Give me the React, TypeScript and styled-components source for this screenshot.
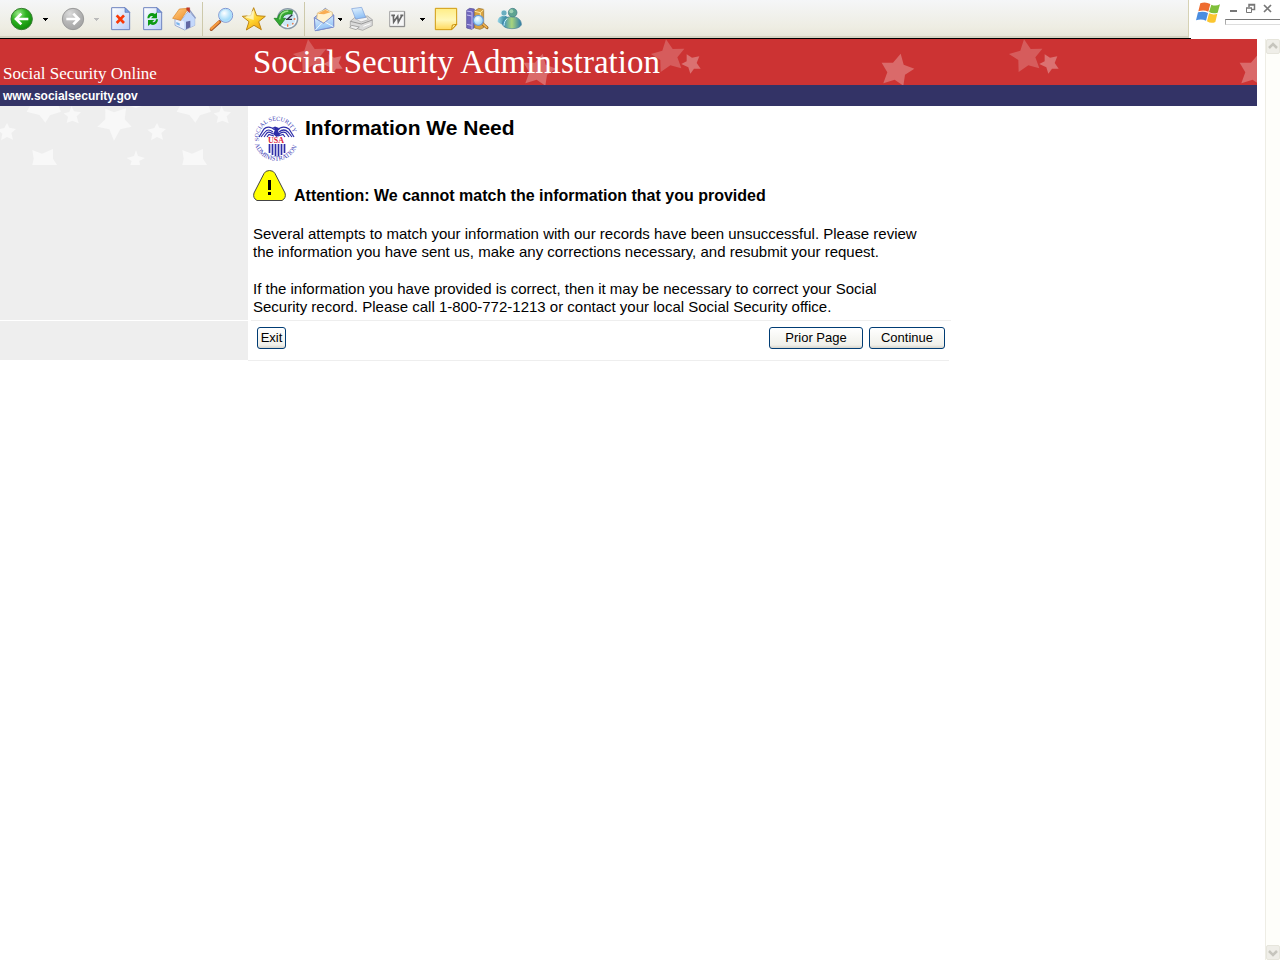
import React from "react";
import styled, { createGlobalStyle } from "styled-components";

const GlobalStyle = createGlobalStyle`
  * { box-sizing: border-box; }
  body { margin: 0; background: #fff; color: #000; font-family: "Liberation Sans", Arial, sans-serif; }
  button { font-family: inherit; }
`;

const Window = styled.div`
  min-height: 100vh;
  display: flex;
  flex-direction: column;
`;

/* ---------- browser chrome ---------- */
const Chrome = styled.div`
  display: flex;
  height: 39px;
`;
const ToolbarEdge = styled.div`
  flex: 1;
  padding-right: 2px;
  border-bottom: 1px solid #000;
`;
const Toolbar = styled.div`
  height: 38px;
  display: flex;
  padding-left: 6px;
  background: linear-gradient(#f5f6f8, #eeede3 75%, #e9e7da);
  border-right: 1px solid #d6d2b4;
  border-bottom: 2px solid #d5d3c1;
`;
const Group = styled.div<{ $after?: number }>`
  display: flex;
  margin-right: ${(p) => p.$after ?? 0}px;
`;
const Separator = styled.span`
  width: 1px;
  margin: 2px 3px 0 1px;
  background: #cdc9ab;
`;
const ToolButton = styled.button<{ $width?: number }>`
  width: ${(p) => p.$width ?? 32}px;
  height: 38px;
  padding: 0;
  border: 0;
  background: none;
  svg { display: block; }
`;
const CaptionArea = styled.div`
  width: 89px;
  display: flex;
  padding-left: 3px;
`;
const CaptionRight = styled.div`
  flex: 1;
  margin-left: 3px;
`;
const CaptionButtons = styled.div`
  height: 19px;
  display: flex;
  justify-content: space-between;
  padding: 2px 6px 0 2px;
`;
const CaptionButton = styled.button`
  width: 13px;
  height: 13px;
  padding: 0;
  border: 0;
  background: none;
  svg { display: block; }
`;
const CaptionField = styled.div`
  height: 6px;
  border: 1px solid #aaa;
  border-top-color: #777;
  border-right: 0;
  border-bottom-color: #ddd;
`;

/* ---------- page ---------- */
const Viewport = styled.div`
  flex: 1;
  display: flex;
`;
const Page = styled.div`
  flex: 1;
  padding-right: 8px;
`;
const Header = styled.header`
  display: grid;
  grid-template-columns: 248px 1fr;
  color: #fff;
`;
const SiteName = styled.div`
  height: 46px;
  padding: 24px 0 0 3px;
  background: #cc3333;
  font: 17px/22px "Liberation Serif", Georgia, serif;
  white-space: nowrap;
`;
const Banner = styled.div`
  position: relative;
  height: 46px;
  padding: 3px 0 0 5px;
  background: #cc3333;
  overflow: hidden;
`;
const BannerStars = styled.svg`
  position: absolute;
  inset: 0;
  width: 100%;
  height: 100%;
`;
const BannerTitle = styled.div`
  position: relative;
  font: 33px/40px "Liberation Serif", Georgia, serif;
  white-space: nowrap;
`;
const AddressBar = styled.div`
  grid-column: 1 / -1;
  height: 21px;
  padding-left: 3px;
  background: #333366;
  font-size: 12px;
  font-weight: bold;
  line-height: 22px;
`;
const AddressLink = styled.a`
  color: #fff;
  text-decoration: none;
`;
const Body = styled.div`
  display: grid;
  grid-template-columns: 248px minmax(0, 703px);
`;
const Sidebar = styled.aside`
  background: #eee;
  svg { display: block; }
`;
const SidebarFoot = styled.div`
  margin-bottom: 1px;
  background: #eee;
  border-top: 1px solid #fff;
`;
const Main = styled.main`
  padding: 9px 0 4px 5px;
`;
const TitleRow = styled.div`
  display: flex;
  gap: 5px;
  height: 54px;
`;
const Title = styled.h1`
  margin: 0;
  font-size: 21px;
  line-height: 26px;
`;
const AlertRow = styled.div`
  display: flex;
  align-items: flex-end;
  gap: 8px;
  height: 36px;
  margin-bottom: 20px;
`;
const AlertIcon = styled.svg`
  flex: none;
  margin-bottom: 3px;
`;
const AlertText = styled.h2`
  margin: 0;
  font-size: 16px;
  line-height: 18px;
`;
const Paragraph = styled.p`
  margin: 0;
  font-size: 15px;
  line-height: 18px;
  & + & { margin-top: 19px; }
`;
const Actions = styled.div`
  height: 41px;
  border-bottom: 1px solid #eee;
  margin-right: 2px;
`;
const ActionsInner = styled.div`
  display: flex;
  gap: 6px;
  margin: 0 -2px 0 3px;
  padding: 6px 6px 0;
  border-top: 1px solid #eee;
`;
const FormButton = styled.button<{ $width: number; $push?: boolean }>`
  width: ${(p) => p.$width}px;
  height: 22px;
  margin-right: ${(p) => (p.$push ? "auto" : "0")};
  padding: 0 0 1px;
  border: 1px solid #003c74;
  border-radius: 3px;
  background: linear-gradient(#fff, #f0f0ea 85%, #d8d4ca);
  color: #000;
  font-size: 13px;
  line-height: 18px;
`;

/* ---------- scrollbar ---------- */
const Scrollbar = styled.div`
  width: 15px;
  display: flex;
  flex-direction: column;
  justify-content: space-between;
  background: #fefefa;
  border-left: 1px solid #eeede5;
`;
const ScrollButton = styled.button`
  height: 15px;
  padding: 0;
  border: 1px solid #e6e5dc;
  border-radius: 2px;
  background: #efeee8;
  svg { display: block; }
`;

/* Icons are drawn on a grid of three units to the pixel. */
const Icon = ({ x, w = 96, children }: { x: number; w?: number; children: React.ReactNode }) => (
  <svg width={w / 3} height="38" viewBox={`${x} 0 ${w} 114`} aria-hidden="true">
    {children}
  </svg>
);

const CaretButton = ({ label, width = 14, faded }: { label: string; width?: number; faded?: boolean }) => (
  <ToolButton $width={width} aria-label={label}>
    <svg width={width} height="38" viewBox={`${-width / 2} 0 ${width} 38`}>
      <path d="M-2 18h5v1h-1v1h-1v1h-1v-1h-1v-1h-1z" fill={faded ? "#bbb" : "#000"} />
    </svg>
  </ToolButton>
);

const DefsSvg = styled.svg`
  position: absolute;
`;

const Defs = () => (
  <DefsSvg width="0" height="0" aria-hidden="true">
    <defs>
      <radialGradient id="green" cx=".35" cy=".25" r=".8">
        <stop offset="0" stopColor="#9be88a" /><stop offset=".45" stopColor="#2fb321" /><stop offset="1" stopColor="#0c8a08" />
      </radialGradient>
      <radialGradient id="grey" cx=".35" cy=".25" r=".8">
        <stop offset="0" stopColor="#dcdcdc" /><stop offset=".5" stopColor="#b8b8b8" /><stop offset="1" stopColor="#a2a2a2" />
      </radialGradient>
      <linearGradient id="paper" x2="1" y2="1">
        <stop offset="0" stopColor="#fff" /><stop offset="1" stopColor="#b9cdf8" />
      </linearGradient>
      <linearGradient id="roof" x2="1" y2="1">
        <stop offset="0" stopColor="#ffd08a" /><stop offset="1" stopColor="#f08a20" />
      </linearGradient>
      <radialGradient id="glass" cx=".4" cy=".35">
        <stop offset="0" stopColor="#fff" /><stop offset="1" stopColor="#a5dcfa" />
      </radialGradient>
      <linearGradient id="gold" x2=".7" y2="1">
        <stop offset="0" stopColor="#fffbc0" /><stop offset=".6" stopColor="#ffd42e" /><stop offset="1" stopColor="#f0a010" />
      </linearGradient>
      <linearGradient id="note" x2="0" y2="1">
        <stop offset="0" stopColor="#ffed85" /><stop offset=".55" stopColor="#fff8bb" /><stop offset="1" stopColor="#ffd85a" />
      </linearGradient>
      <linearGradient id="sheet" x2=".3" y2="1">
        <stop offset="0" stopColor="#e8f6ff" /><stop offset="1" stopColor="#8fc0f5" />
      </linearGradient>
      <linearGradient id="teal" x2="1">
        <stop offset="0" stopColor="#9ad6e8" /><stop offset=".45" stopColor="#4f9eb0" /><stop offset="1" stopColor="#2b7fb0" />
      </linearGradient>
      <linearGradient id="moss" x2="1">
        <stop offset="0" stopColor="#2f86c4" /><stop offset=".5" stopColor="#a8d47c" /><stop offset="1" stopColor="#2d7cab" />
      </linearGradient>
    </defs>
  </DefsSvg>
);

const PageShape = ({ x }: { x: number }) => (
  <g transform={`translate(${x} 0)`}>
    <path d="M1 23H41L55 37V89H1Z" fill="url(#paper)" stroke="#6f84c0" strokeWidth="3" />
    <path d="M41 23V37H55Z" fill="#7ea2e6" stroke="#5670b4" strokeWidth="2" />
  </g>
);

const BackIcon = () => (
  <Icon x={18}>
    <circle cx="65" cy="57" r="32" fill="url(#green)" stroke="#3a7d34" strokeWidth="3" />
    <path d="M64 41L48 57L64 73M49 57H85" fill="none" stroke="#fff" strokeWidth="8" />
  </Icon>
);
const ForwardIcon = () => (
  <Icon x={171}>
    <circle cx="219" cy="57" r="32" fill="url(#grey)" stroke="#9a9a9a" strokeWidth="3" />
    <path d="M220 41L236 57L220 73M235 57H199" fill="none" stroke="#fff" strokeWidth="8" />
  </Icon>
);
const StopIcon = () => (
  <Icon x={315}>
    <PageShape x={334} />
    <path d="M350 46L372 69M372 46L350 69" stroke="#fa3a08" strokeWidth="8" />
  </Icon>
);
const RefreshIcon = () => (
  <Icon x={411}>
    <PageShape x={430} />
    <path d="M442 55C443 40 456 35 465 42L471 37V55H453L459 49C453 46 449 49 448 55Z" fill="#0c9a12" />
    <path d="M474 58C473 73 460 79 451 72L444 78V60H463L457 66C463 68 467 65 468 58Z" fill="#0c9a12" />
  </Icon>
);
const HomeIcon = () => (
  <Icon x={507}>
    <path d="M525 55L543 62L566 33L584 54V76L554 90L525 76Z" fill="#e9f0ff" stroke="#7a8fc5" strokeWidth="2" />
    <path d="M545 60L566 35L584 55V76L553 89V65Z" fill="#c4d8fb" />
    <path d="M518 55L538 27L565 25L542 61Z" fill="url(#roof)" stroke="#d98222" strokeWidth="2" />
    <path d="M565 25L587 55" stroke="#8d9dc8" strokeWidth="4" />
    <path d="M560 23H569V38L560 30Z" fill="#c93a22" stroke="#922" />
    <path d="M558 65L571 62V82L558 88Z" fill="#6268a4" />
    <path d="M529 66L539 70V77L529 73Z" fill="#79b3ea" />
  </Icon>
);
const SearchIcon = () => (
  <Icon x={18}>
    <path d="M34 88L59 65" stroke="#a5562a" strokeWidth="10" strokeLinecap="round" />
    <path d="M34 86L56 66" stroke="#f59a3e" strokeWidth="7" strokeLinecap="round" />
    <circle cx="77" cy="46" r="21" fill="url(#glass)" stroke="#8095d2" strokeWidth="3" />
    <circle cx="77" cy="46" r="18" fill="none" stroke="#b4e0fa" strokeWidth="3" />
  </Icon>
);
const StarIcon = () => (
  <Icon x={114}>
    <path d="M161 23L170 47L196 49L176 65L184 89L162 76L139 90L147 65L127 49L152 47Z" fill="url(#gold)" stroke="#bd8614" strokeWidth="3" strokeLinejoin="round" />
    <path d="M161 30V60L136 52Z" fill="#fffde0" opacity=".7" />
  </Icon>
);
const HistoryIcon = () => (
  <Icon x={210}>
    <circle cx="263" cy="56" r="30" fill="#dcebf5" stroke="#8b9aa8" strokeWidth="4" />
    <circle cx="263" cy="56" r="25" fill="#cfe7f6" stroke="#fff" strokeWidth="3" />
    <path d="M262 58L277 44M258 58H276" stroke="#334" strokeWidth="4" />
    <path d="M263 73V80M281 57H286M277 70L280 73" stroke="#f06b30" strokeWidth="4" />
    <path d="M278 33C258 25 236 36 233 55H222L240 77L257 55H248C250 44 264 40 276 43Z" fill="#35a832" stroke="#187a1c" strokeWidth="2" />
    <path d="M265 33C249 34 240 44 239 58" stroke="#9be28d" strokeWidth="4" fill="none" />
  </Icon>
);
const MailIcon = () => (
  <Icon x={324} w={90}>
    <path d="M343 53L376 25L401 45V81L346 92Z" fill="#a8bcf2" stroke="#7187cc" strokeWidth="3" strokeLinejoin="round" />
    <path d="M352 39L377 27L397 37V59L372 69L350 60Z" fill="#fff2cf" stroke="#d6b373" strokeWidth="2" />
    <path d="M353 41L376 29L391 37L372 43Z" fill="#f9ad52" />
    <path d="M343 53L371 70L401 45V81L346 92Z" fill="url(#sheet)" stroke="#7c8dcb" strokeWidth="3" strokeLinejoin="round" />
    <path d="M346 90L366 68M400 80L376 67" stroke="#eef7ff" strokeWidth="3" />
  </Icon>
);
const PrinterIcon = () => (
  <Icon x={444}>
    <path d="M457 64L472 51L509 48L523 59V77L494 91L457 80Z" fill="#dadada" stroke="#999" strokeWidth="2" strokeLinejoin="round" />
    <path d="M457 64L490 72L523 60" fill="none" stroke="#999" strokeWidth="3" />
    <path d="M473 56L506 52L511 59L489 66Z" fill="#f5f5f5" stroke="#aaa" strokeWidth="2" />
    <path d="M461 26L491 22L503 52L473 57Z" fill="url(#sheet)" stroke="#789bd8" strokeWidth="2" />
    <path d="M461 76L484 81L474 89L455 83Z" fill="#eee" stroke="#888" strokeWidth="2" />
    <path d="M496 79L517 71" stroke="#fff" strokeWidth="3" />
  </Icon>
);
const WordIcon = () => (
  <Icon x={42}>
    <path d="M65 34H109V79H65Z" fill="#f6f6f6" stroke="#a3a3a3" strokeWidth="3" />
    <path d="M65 80H110V34" fill="none" stroke="#888" strokeWidth="3" />
    <path d="M70 46H81M76 46L77 66L89 49L91 66L102 46M97 46H106" fill="none" stroke="#666" strokeWidth="5" />
  </Icon>
);
const NoteIcon = () => (
  <Icon x={180}>
    <path d="M196 25H260V74L245 89H196Z" fill="url(#note)" stroke="#d09a10" strokeWidth="3" />
    <path d="M245 89L247 75L260 73Z" fill="#fff1a0" stroke="#c98f08" strokeWidth="3" />
  </Icon>
);
const BooksIcon = () => (
  <Icon x={275}>
    <path d="M289 31L298 25L312 27V83L304 88L289 84Z" fill="#7067bd" stroke="#4f4795" strokeWidth="2" />
    <path d="M289 33L305 36V87M290 45L304 48M290 73L304 76" stroke="#c2bbf0" strokeWidth="3" fill="none" />
    <path d="M313 33L325 25L340 28V83L329 88L313 84Z" fill="#d9a340" stroke="#94702f" strokeWidth="2" />
    <path d="M313 34L330 38L340 29M330 38V50" stroke="#ffe6a0" strokeWidth="3" fill="none" />
    <path d="M336 71L350 83" stroke="#9b6425" strokeWidth="9" strokeLinecap="round" />
    <path d="M338 72L349 82" stroke="#f4b950" strokeWidth="5" strokeLinecap="round" />
    <circle cx="324" cy="61" r="15" fill="url(#glass)" stroke="#6c9bd8" strokeWidth="4" />
  </Icon>
);
const PeopleIcon = () => (
  <Icon x={374}>
    <path d="M385 66C384 53 394 48 405 48S422 54 421 69Q403 80 385 66Z" fill="url(#teal)" />
    <circle cx="404" cy="39" r="9" fill="#6aaec0" stroke="#e8f6f8" strokeWidth="2" />
    <path d="M399 74C399 57 413 50 428 50S457 58 456 75Q450 86 428 86T399 74Z" fill="url(#moss)" stroke="#4a8398" strokeWidth="2" />
    <path d="M404 77C405 66 407 61 414 56" stroke="#c6f0ff" strokeWidth="3" fill="none" />
    <circle cx="430" cy="38" r="13" fill="#5ea391" stroke="#3d7787" strokeWidth="2" />
    <circle cx="426" cy="34" r="6" fill="#9fd2b4" />
  </Icon>
);

const WindowsFlag = () => (
  <Icon x={102} w={84}>
    <path d="M121 10Q136 4 151 12L145 35Q131 29 115 34Z" fill="#ee6c30" />
    <path d="M154 14Q167 20 180 13L173 38Q160 43 147 36Z" fill="#7fbf3a" />
    <path d="M114 37Q130 32 144 39L138 62Q124 56 108 61Z" fill="#4a8de0" />
    <path d="M147 40Q160 46 172 41L166 66Q153 72 141 64Z" fill="#fbc630" />
  </Icon>
);

/* Corner points of the translucent banner stars, which repeat every 358px. */
const BannerPattern = () => (
  <BannerStars aria-hidden="true">
    <defs>
      <pattern id="banner" width="358" height="46" patternUnits="userSpaceOnUse">
        <g fill="#fff" transform="translate(-104 -3) scale(.33333)">
          <path opacity=".2" d="M492 10L512 39L547 38L526 64L538 97L505 88L476 108L475 72L447 54L481 44Z" />
          <path opacity=".3" d="M554 55L570 65L592 61L584 81L596 98L576 98L565 113L559 94L538 84L554 76Z" />
        </g>
        <path fill="#fff" opacity=".27" transform="translate(254 -3) scale(.33333)" d="M122 53L131 86L163 98L135 116L130 149L104 131L70 142L82 109L65 80L99 80Z" />
      </pattern>
    </defs>
    <rect width="100%" height="100%" fill="url(#banner)" />
  </BannerStars>
);

const sideStars = [
  "M90 18H176L183 35L150 46L136 68L118 45L80 35Z",
  "M214 18L222 34L243 37L230 49L236 70L217 62L200 69L204 50L191 40L208 36Z",
  "M21 69L28 83L48 87L34 99L39 119L21 111L3 121L7 101L-8 89L13 84Z",
  "M97 150L126 161L159 147V176L171 195H97L101 176Z",
  "M316 26L342 37L378 25L374 58L395 80L361 88L342 122L328 88L292 80L316 58Z",
  "M408 150L414 168L435 174L418 183L420 195H391L395 183L380 174L402 168Z",
  "M390 18H425L407 24Z",
];
const SidebarStars = () => (
  <svg width="248" height="59" viewBox="0 18 744 177" aria-hidden="true">
    {[0, 450].map((dx) => (
      <g key={dx} transform={`translate(${dx} 0)`} fill="#f8f8f8">
        {sideStars.map((d) => <path key={d} d={d} />)}
      </g>
    ))}
  </svg>
);

const Seal = () => (
  <svg width="47" height="48" viewBox="0 0 47 48" role="img" aria-label="Social Security Administration seal">
    <defs>
      <path id="sealTop" d="M6 26A17.500 17.500 0 1 1 40.500 26" />
      <path id="sealBottom" d="M1.500 27A22 22 0 0 0 45 27" />
    </defs>
    <g fill="#3b3bb5" fontFamily="Liberation Serif, serif" fontSize="6">
      <text><textPath href="#sealTop">SOCIAL SECURITY</textPath></text>
      <text fontSize="6.500"><textPath href="#sealBottom" startOffset="2">ADMINISTRATION</textPath></text>
    </g>
    <g fill="none" stroke="#2d2da8" strokeWidth="1.200">
      <path d="M6 22L11 14Q14 11 19 13L22 15M41 22L36 14Q32 11 27 13L25 15" />
      <path d="M8 22L12 17Q15 13 20 17M11 22L14 18Q16 16 20 19M14 22L16 19.500L21 21" />
      <path d="M39 22L35 17Q31 13 26 17M36 22L33 18Q30 16 26 19M32 22L30 19.500L25 21" />
    </g>
    <path d="M19 13L22 11.500L26 13L25 16L27 20L23.500 22L20 19L22 15V14Z" fill="#2d2da8" />
    <text x="23" y="28" textAnchor="middle" fill="#dc1c3c" fontFamily="Liberation Serif, serif" fontSize="8" fontWeight="bold">USA</text>
    <path d="M16.500 29V38M19.500 29V40M22.500 29V41M25.500 29V41M28.500 29V40M31.500 29V38" stroke="#2d2da8" strokeWidth="1.700" />
  </svg>
);

const Attention = () => (
  <AlertIcon width="33" height="32" viewBox="0 0 33 32" role="img" aria-label="Attention">
    <path d="M11 3.500Q12.500.5 16.500.5T22 3.500L32 23Q33.500 28 29 30.500H4Q-.5 28 1 23Z" fill="#ff0" stroke="#444" strokeWidth="1" />
    <path d="M15 10H18V20H15ZM15 22H18V25H15Z" fill="#000" />
  </AlertIcon>
);

export default function App() {
  return (
    <Window>
      <GlobalStyle />
      <Defs />
      <Chrome>
        <ToolbarEdge>
          <Toolbar role="toolbar">
            <Group $after={5}>
              <ToolButton aria-label="Back"><BackIcon /></ToolButton>
              <CaretButton label="Back history" />
            </Group>
            <Group $after={2}>
              <ToolButton aria-label="Forward"><ForwardIcon /></ToolButton>
              <CaretButton label="Forward history" faded />
            </Group>
            <Group>
              <ToolButton aria-label="Stop"><StopIcon /></ToolButton>
              <ToolButton aria-label="Refresh"><RefreshIcon /></ToolButton>
              <ToolButton aria-label="Home"><HomeIcon /></ToolButton>
            </Group>
            <Separator />
            <Group $after={1}>
              <ToolButton aria-label="Search"><SearchIcon /></ToolButton>
              <ToolButton aria-label="Favorites"><StarIcon /></ToolButton>
              <ToolButton aria-label="History"><HistoryIcon /></ToolButton>
            </Group>
            <Separator />
            <Group $after={4}>
              <ToolButton aria-label="Mail" $width={30}><MailIcon /></ToolButton>
              <CaretButton label="Mail options" width={4} />
            </Group>
            <Group $after={4}>
              <ToolButton aria-label="Print"><PrinterIcon /></ToolButton>
            </Group>
            <Group>
              <ToolButton aria-label="Edit"><WordIcon /></ToolButton>
              <CaretButton label="Edit options" width={16} />
              <ToolButton aria-label="Notes"><NoteIcon /></ToolButton>
              <ToolButton aria-label="Research"><BooksIcon /></ToolButton>
              <ToolButton aria-label="Messenger"><PeopleIcon /></ToolButton>
            </Group>
          </Toolbar>
        </ToolbarEdge>
        <CaptionArea>
          <WindowsFlag />
          <CaptionRight>
            <CaptionButtons>
              <CaptionButton aria-label="Minimize">
                <svg width="13" height="13"><path d="M3 9H10" stroke="#777" strokeWidth="2" /></svg>
              </CaptionButton>
              <CaptionButton aria-label="Restore">
                <svg width="13" height="13" fill="none" stroke="#777"><path d="M5 5V2.500H10.500V7.500H8M5 3H11M2 6H8" strokeWidth="1.500" /><path d="M2.500 6V10.500H7.500V6" /></svg>
              </CaptionButton>
              <CaptionButton aria-label="Close">
                <svg width="13" height="13"><path d="M3 3L10 10M10 3L3 10" stroke="#777" strokeWidth="1.700" /></svg>
              </CaptionButton>
            </CaptionButtons>
            <CaptionField />
          </CaptionRight>
        </CaptionArea>
      </Chrome>
      <Viewport>
        <Page>
          <Header>
            <SiteName>Social Security Online</SiteName>
            <Banner>
              <BannerPattern />
              <BannerTitle>Social Security Administration</BannerTitle>
            </Banner>
            <AddressBar>
              <AddressLink href="#">www.socialsecurity.gov</AddressLink>
            </AddressBar>
          </Header>
          <Body>
            <Sidebar><SidebarStars /></Sidebar>
            <Main>
              <TitleRow>
                <Seal />
                <Title>Information We Need</Title>
              </TitleRow>
              <AlertRow>
                <Attention />
                <AlertText>Attention: We cannot match the information that you provided</AlertText>
              </AlertRow>
              <Paragraph>
                Several attempts to match your information with our records have been unsuccessful. Please review
                <br />
                the information you have sent us, make any corrections necessary, and resubmit your request.
              </Paragraph>
              <Paragraph>
                If the information you have provided is correct, then it may be necessary to correct your Social
                <br />
                Security record. Please call 1-800-772-1213 or contact your local Social Security office.
              </Paragraph>
            </Main>
            <SidebarFoot />
            <Actions>
              <ActionsInner>
                <FormButton type="button" $width={29} $push>Exit</FormButton>
                <FormButton type="button" $width={94}>Prior Page</FormButton>
                <FormButton type="button" $width={76}>Continue</FormButton>
              </ActionsInner>
            </Actions>
          </Body>
        </Page>
        <Scrollbar>
          <ScrollButton aria-label="Scroll up">
            <svg width="12" height="13"><path d="M2 8L6 4L10 8" fill="none" stroke="#c6c5bd" strokeWidth="2.500" /></svg>
          </ScrollButton>
          <ScrollButton aria-label="Scroll down">
            <svg width="12" height="13"><path d="M2 5L6 9L10 5" fill="none" stroke="#c6c5bd" strokeWidth="2.500" /></svg>
          </ScrollButton>
        </Scrollbar>
      </Viewport>
    </Window>
  );
}
